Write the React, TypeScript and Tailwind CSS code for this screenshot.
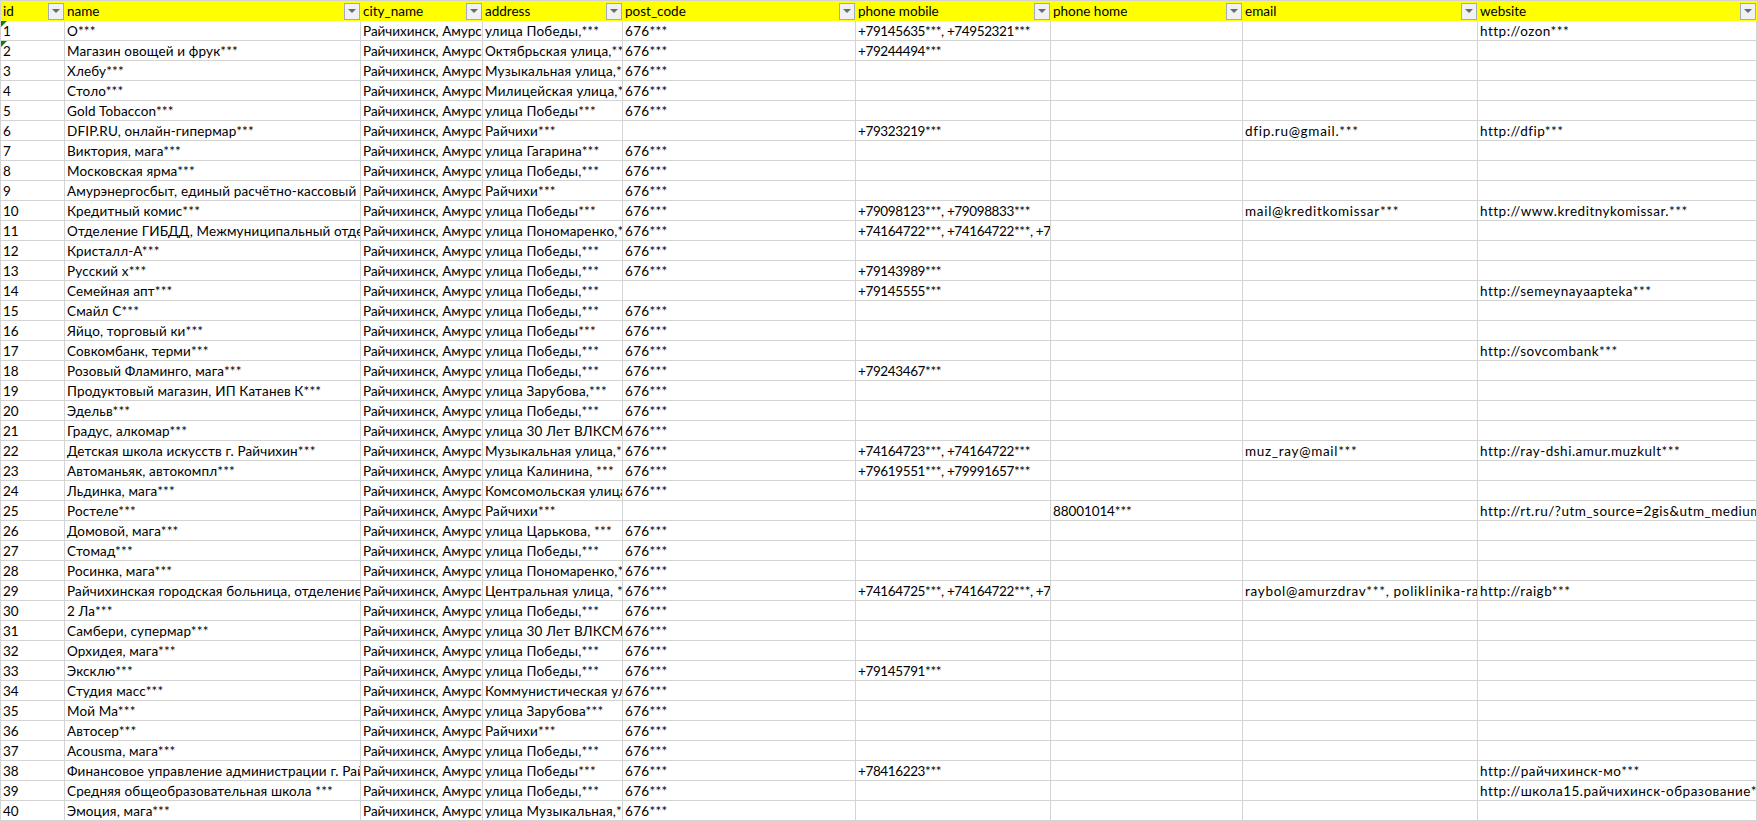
import clsx from "clsx";

const columns = ["id", "name", "city_name", "address", "post_code", "phone mobile", "phone home", "email", "website"];

// Lato's latin and digits run a bit off from the original's, so each column gets its own tracking
const tracking = [
  "",
  "tracking-[0.15px]",
  "",
  "tracking-[0.2px]",
  "tracking-[0.3px]",
  "tracking-[-0.38px]",
  "tracking-[-0.1px]",
  "tracking-[0.7px]",
  "tracking-[0.5px]",
];

const city = "Райчихинск, Амурская область";
const code = "676***";

// name, address, post_code, phone mobile, phone home, email, website
const rows: string[][] = [
  ["О***", "улица Победы,***", code, "+79145635***, +74952321***", "", "", "http://ozon***"],
  ["Магазин овощей и фрук***", "Октябрьская улица,***", code, "+79244494***", "", "", ""],
  ["Хлебу***", "Музыкальная улица,***", code, "", "", "", ""],
  ["Столо***", "Милицейская улица,***", code, "", "", "", ""],
  ["Gold Tobaccon***", "улица Победы***", code, "", "", "", ""],
  ["DFIP.RU, онлайн-гипермар***", "Райчихи***", "", "+79323219***", "", "dfip.ru@gmail.***", "http://dfip***"],
  ["Виктория, мага***", "улица Гагарина***", code, "", "", "", ""],
  ["Московская ярма***", "улица Победы,***", code, "", "", "", ""],
  ["Амурэнергосбыт, единый расчётно-кассовый центр***", "Райчихи***", code, "", "", "", ""],
  ["Кредитный комис***", "улица Победы***", code, "+79098123***, +79098833***", "", "mail@kreditkomissar***", "http://www.kreditnykomissar.***"],
  ["Отделение ГИБДД, Межмуниципальный отдел***", "улица Пономаренко,***", code, "+74164722***, +74164722***, +74164722***", "", "", ""],
  ["Кристалл-А***", "улица Победы,***", code, "", "", "", ""],
  ["Русский х***", "улица Победы,***", code, "+79143989***", "", "", ""],
  ["Семейная апт***", "улица Победы,***", "", "+79145555***", "", "", "http://semeynayaapteka***"],
  ["Смайл С***", "улица Победы,***", code, "", "", "", ""],
  ["Яйцо, торговый ки***", "улица Победы***", code, "", "", "", ""],
  ["Совкомбанк, терми***", "улица Победы,***", code, "", "", "", "http://sovcombank***"],
  ["Розовый Фламинго, мага***", "улица Победы,***", code, "+79243467***", "", "", ""],
  ["Продуктовый магазин, ИП Катанев К***", "улица Зарубова,***", code, "", "", "", ""],
  ["Эдельв***", "улица Победы,***", code, "", "", "", ""],
  ["Градус, алкомар***", "улица 30 Лет ВЛКСМ***", code, "", "", "", ""],
  ["Детская школа искусств г. Райчихин***", "Музыкальная улица,***", code, "+74164723***, +74164722***", "", "muz_ray@mail***", "http://ray-dshi.amur.muzkult***"],
  ["Автоманьяк, автокомпл***", "улица Калинина, ***", code, "+79619551***, +79991657***", "", "", ""],
  ["Льдинка, мага***", "Комсомольская улица***", code, "", "", "", ""],
  ["Ростеле***", "Райчихи***", "", "", "88001014***", "", "http://rt.ru/?utm_source=2gis&utm_medium=***"],
  ["Домовой, мага***", "улица Царькова, ***", code, "", "", "", ""],
  ["Стомад***", "улица Победы,***", code, "", "", "", ""],
  ["Росинка, мага***", "улица Пономаренко,***", code, "", "", "", ""],
  ["Райчихинская городская больница, отделение***", "Центральная улица, ***", code, "+74164725***, +74164722***, +74164722***", "", "raybol@amurzdrav***, poliklinika-raigb***", "http://raigb***"],
  ["2 Ла***", "улица Победы,***", code, "", "", "", ""],
  ["Самбери, супермар***", "улица 30 Лет ВЛКСМ,***", code, "", "", "", ""],
  ["Орхидея, мага***", "улица Победы,***", code, "", "", "", ""],
  ["Эксклю***", "улица Победы,***", code, "+79145791***", "", "", ""],
  ["Студия масс***", "Коммунистическая улица***", code, "", "", "", ""],
  ["Мой Ма***", "улица Зарубова***", code, "", "", "", ""],
  ["Автосер***", "Райчихи***", code, "", "", "", ""],
  ["Acousma, мага***", "улица Победы,***", code, "", "", "", ""],
  ["Финансовое управление администрации г. Райчихинска***", "улица Победы***", code, "+78416223***", "", "", "http://райчихинск-мо***"],
  ["Средняя общеобразовательная школа ***", "улица Победы,***", code, "", "", "", "http://школа15.райчихинск-образование***"],
  ["Эмоция, мага***", "улица Музыкальная,***", code, "", "", "", ""],
];

function FilterButton() {
  return (
    <span className="flex h-[17px] w-4 shrink-0 items-center justify-center border border-[#a3acbb] bg-[#f0f1f3]">
      <svg width="8" height="4" viewBox="0 0 8 4">
        <path d="M0 0H8L4 4Z" fill="#6b6b6b" />
      </svg>
    </span>
  );
}

function Cell({ text, column, note }: { text: string; column: number; note?: boolean }) {
  return (
    <div
      className={clsx(
        "relative h-5 overflow-hidden border-r border-b border-[#d4d4d4] pl-0.5 leading-[20px] whitespace-nowrap",
        tracking[column],
      )}
    >
      {note && (
        <svg className="absolute top-0 left-0" width="6" height="6" viewBox="0 0 6 6">
          <path d="M0 0H6L0 6Z" fill="#107c10" />
        </svg>
      )}
      {text}
    </div>
  );
}

export default function App() {
  return (
    <div className="h-[821px] w-full overflow-hidden border-t border-l border-[#d4d4d4] bg-white font-['Lato','Noto_Sans',sans-serif] text-[13.5px] text-black">
      <div className="grid grid-cols-[64px_296px_122px_140px_233px_195px_192px_235px_279px]">
        {columns.map((col) => (
          <div key={col} className="flex h-5 items-center justify-between overflow-hidden bg-[#ffff00] pr-px pl-0.5">
            <span>{col}</span>
            <FilterButton />
          </div>
        ))}
        {rows.map((row, i) => {
          const [name, address, post, mobile, home, email, website] = row;
          return [String(i + 1), name, city, address, post, mobile, home, email, website].map((text, j) => (
            <Cell key={`${i}-${j}`} text={text} column={j} note={j === 0 && i < 2} />
          ));
        })}
      </div>
    </div>
  );
}
